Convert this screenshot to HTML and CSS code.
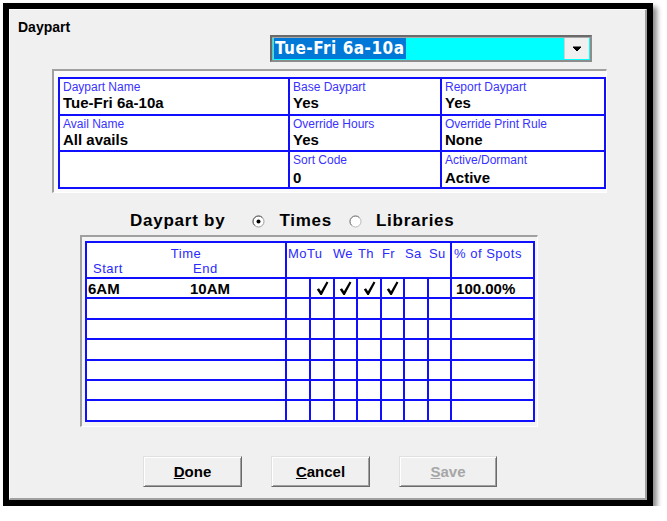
FILE: index.html
```html
<!DOCTYPE html>
<html>
<head>
<meta charset="utf-8">
<link rel="stylesheet" href="styles.css">
</head>
<body>
<div class="frame">
  <div class="win">
    <div class="head">
      <div class="title">Daypart</div>
      <div class="combo">
        <div class="combo-field"><span class="sel">Tue-Fri 6a-10a</span></div>
        <div class="combo-btn">
          <svg width="10" height="6" viewBox="0 0 10 6"><path d="M1 1 H9 L5 5 Z" fill="#000" stroke="#000" stroke-width="1"/></svg>
        </div>
      </div>
    </div>

    <div class="info-panel">
      <table class="info">
        <colgroup><col class="c1"><col class="c2"><col class="c3"></colgroup>
        <tr class="r1">
          <td><div class="lbl">Daypart Name</div><div class="val">Tue-Fri 6a-10a</div></td>
          <td><div class="lbl">Base Daypart</div><div class="val">Yes</div></td>
          <td><div class="lbl">Report Daypart</div><div class="val">Yes</div></td>
        </tr>
        <tr class="r2">
          <td><div class="lbl">Avail Name</div><div class="val">All avails</div></td>
          <td><div class="lbl">Override Hours</div><div class="val">Yes</div></td>
          <td><div class="lbl">Override Print Rule</div><div class="val">None</div></td>
        </tr>
        <tr class="r3">
          <td></td>
          <td><div class="lbl">Sort Code</div><div class="val low">0</div></td>
          <td><div class="lbl">Active/Dormant</div><div class="val low">Active</div></td>
        </tr>
      </table>
    </div>

    <div class="by-row">
      <span class="by-label">Daypart by</span>
      <span class="radio">
        <svg width="13" height="13" viewBox="0 0 13 13"><circle cx="6.5" cy="6.5" r="5.5" fill="#fff" stroke="#9a9a9a" stroke-width="1"/><path d="M2.6 10.4 A5.5 5.5 0 0 1 10.4 2.6" fill="none" stroke="#5d5d5d" stroke-width="1"/><circle cx="6.5" cy="6.5" r="2" fill="#000"/></svg>
      </span>
      <span class="opt">Times</span>
      <span class="radio">
        <svg width="13" height="13" viewBox="0 0 13 13"><circle cx="6.5" cy="6.5" r="5.5" fill="#fff" stroke="#b8b8b8" stroke-width="1"/><path d="M2.6 10.4 A5.5 5.5 0 0 1 10.4 2.6" fill="none" stroke="#7d7d7d" stroke-width="1"/></svg>
      </span>
      <span class="opt">Libraries</span>
    </div>

    <div class="grid-panel">
      <table class="grid">
        <colgroup>
          <col class="g-time"><col class="g-d24"><col class="g-d24"><col class="g-d23"><col class="g-d24"><col class="g-d23"><col class="g-d24"><col class="g-d23"><col class="g-pct">
        </colgroup>
        <tr class="hdr">
          <td class="h-time">
            <div class="h-center">Time</div>
            <div class="h-sub"><span class="h-start">Start</span><span>End</span></div>
          </td>
          <td colspan="7" class="h-days">
            <span class="d-mo">Mo</span><span class="d-tu">Tu</span><span class="d-we">We</span><span class="d-th">Th</span><span class="d-fr">Fr</span><span class="d-sa">Sa</span><span>Su</span>
          </td>
          <td class="h-pct">% of Spots</td>
        </tr>
        <tr class="row">
          <td class="t-cell"><span class="t-start">6AM</span><span>10AM</span></td>
          <td></td>
          <td class="chk"><svg class="tick" width="13" height="15" viewBox="0 0 13 15"><path d="M0.8 8.6 L3 7.2 L5 10.2 L10.6 0.6 L12.4 1.6 L5.8 14 L4.4 14 Z" fill="#000"/></svg></td>
          <td class="chk"><svg class="tick" width="13" height="15" viewBox="0 0 13 15"><path d="M0.8 8.6 L3 7.2 L5 10.2 L10.6 0.6 L12.4 1.6 L5.8 14 L4.4 14 Z" fill="#000"/></svg></td>
          <td class="chk"><svg class="tick" width="13" height="15" viewBox="0 0 13 15"><path d="M0.8 8.6 L3 7.2 L5 10.2 L10.6 0.6 L12.4 1.6 L5.8 14 L4.4 14 Z" fill="#000"/></svg></td>
          <td class="chk"><svg class="tick" width="13" height="15" viewBox="0 0 13 15"><path d="M0.8 8.6 L3 7.2 L5 10.2 L10.6 0.6 L12.4 1.6 L5.8 14 L4.4 14 Z" fill="#000"/></svg></td>
          <td></td>
          <td></td>
          <td class="pct">100.00%</td>
        </tr>
        <tr class="row b"><td></td><td></td><td></td><td></td><td></td><td></td><td></td><td></td><td></td></tr>
        <tr class="row"><td></td><td></td><td></td><td></td><td></td><td></td><td></td><td></td><td></td></tr>
        <tr class="row b"><td></td><td></td><td></td><td></td><td></td><td></td><td></td><td></td><td></td></tr>
        <tr class="row"><td></td><td></td><td></td><td></td><td></td><td></td><td></td><td></td><td></td></tr>
        <tr class="row"><td></td><td></td><td></td><td></td><td></td><td></td><td></td><td></td><td></td></tr>
        <tr class="row b"><td></td><td></td><td></td><td></td><td></td><td></td><td></td><td></td><td></td></tr>
      </table>
    </div>

    <div class="buttons">
      <button class="btn"><u>D</u>one</button>
      <button class="btn"><u>C</u>ancel</button>
      <button class="btn disabled"><u>S</u>ave</button>
    </div>
  </div>
</div>
</body>
</html>
```

FILE: styles.css
```css
html, body {
  margin: 0;
  padding: 0;
  background: #ffffff;
  font-family: "Liberation Sans", Arial, sans-serif;
}

.frame {
  margin: 3px 0 0 3px;
  width: 638px;
  height: 491px;
  border: 6px solid #000;
  box-shadow: 4px 4px 5px rgba(0, 0, 0, 0.45);
}

.win {
  height: 100%;
  box-sizing: border-box;
  background: #f0f0f0;
  border-left: 1px solid #ffffff;
  border-top: 1px solid #ffffff;
  border-right: 2px solid #a0a0a0;
  border-bottom: 2px solid #a0a0a0;
  display: flex;
  flex-direction: column;
}

/* header */
.head {
  display: flex;
  justify-content: space-between;
  align-items: flex-start;
  padding: 0 53px 0 8px;
}

.title {
  margin-top: 9px;
  font-size: 14px;
  font-weight: bold;
  line-height: 16px;
  color: #000;
}

.combo {
  margin-top: 25px;
  width: 322px;
  height: 27px;
  box-sizing: border-box;
  border: 2px solid #8c8c8c;
  border-top-color: #6a6a6a;
  border-left-color: #6a6a6a;
  box-shadow: inset 1px 1px 0 #a8a8a8;
  background: #00ffff;
  display: flex;
  padding: 1px 1px 1px 2px;
}

.combo-field {
  flex: 1;
  display: flex;
  align-items: stretch;
}

.sel {
  background: #0078d7;
  color: #ffffff;
  font-family: "DejaVu Sans Condensed", "DejaVu Sans", sans-serif;
  font-weight: bold;
  font-size: 17px;
  letter-spacing: 0.5px;
  line-height: 21px;
  padding: 0 1px 0 1px;
}

.combo-btn {
  width: 24px;
  background: #f0f0f0;
  border-left: 1px solid #d0d0d0;
  display: flex;
  align-items: center;
  justify-content: center;
}

/* info panel */
.info-panel {
  margin: 7px 0 0 42px;
  width: 555px;
  box-sizing: border-box;
  border-top: 2px solid #a0a0a0;
  border-left: 2px solid #a0a0a0;
  border-right: 1px solid #ffffff;
  border-bottom: 1px solid #ffffff;
  padding: 6px 2px 3px 4px;
  background: #fafafa;
}

.info {
  border-collapse: collapse;
  table-layout: fixed;
  width: 546px;
  background: #ffffff;
}

.info .c1 { width: 230px; }
.info .c2 { width: 152px; }
.info .c3 { width: 164px; }

.info td {
  border: 2px solid #1010ff;
  vertical-align: top;
  padding: 2px 3px 0 3px;
  height: 33px;
}

.info .r2 td { height: 32px; }

.lbl {
  font-size: 12px;
  line-height: 13px;
  color: #3a32ff;
}

.val {
  font-size: 15px;
  font-weight: bold;
  line-height: 17px;
  color: #000;
}

.val.low { margin-top: 2px; }

/* daypart by */
.by-row {
  margin: 19px 0 0 120px;
  display: flex;
  align-items: center;
  height: 18px;
  font-size: 17px;
  font-weight: bold;
  letter-spacing: 0.75px;
  color: #000;
}

.by-label { margin-right: 27px; }

.radio {
  display: flex;
  align-items: center;
  margin-right: 14px;
}

.opt { margin-right: 17px; }

/* grid panel */
.grid-panel {
  margin: 5px 0 0 70px;
  width: 458px;
  box-sizing: border-box;
  border-top: 2px solid #a0a0a0;
  border-left: 2px solid #a0a0a0;
  border-right: 1px solid #ffffff;
  border-bottom: 1px solid #ffffff;
  padding: 4px 4px 4px 3px;
  background: #f4f4f4;
}

.grid {
  border-collapse: collapse;
  table-layout: fixed;
  width: 448px;
  background: #ffffff;
}

.g-time { width: 200px; }
.g-d24 { width: 24px; }
.g-d23 { width: 23px; }
.g-pct { width: 83px; }

.grid td {
  border: 2px solid #1010ff;
  padding: 0;
  height: 18px;
  vertical-align: middle;
}

.grid .row.b td { height: 19px; }

.grid .hdr td {
  height: 36px;
  vertical-align: top;
  font-size: 13px;
  line-height: 14px;
  color: #2a2aff;
  letter-spacing: 0.5px;
  padding-top: 4px;
  box-sizing: border-box;
}

.h-center { text-align: center; }

.h-sub {
  display: flex;
  padding-left: 6px;
  margin-top: 1px;
}

.h-start { width: 100px; }

.grid .hdr .h-days {
  padding-left: 1px;
  white-space: nowrap;
  letter-spacing: 0.3px;
}

.h-days span { display: inline-block; }
.d-mo { width: 19px; }
.d-tu { width: 26px; }
.d-we { width: 25px; }
.d-th { width: 24px; }
.d-fr { width: 23px; }
.d-sa { width: 24px; }

.grid .hdr .h-pct { padding-left: 2px; }

.t-cell {
  font-size: 15px;
  font-weight: bold;
  padding-left: 1px !important;
}

.t-cell span { display: inline-block; }
.t-start { width: 102px; }

.chk {
  text-align: center;
  line-height: 0;
}

.tick { display: inline-block; vertical-align: middle; }

.pct {
  font-size: 15px;
  font-weight: bold;
  padding-left: 4px !important;
}

/* buttons */
.buttons {
  margin: 29px 0 0 133px;
  display: flex;
  gap: 29px;
}

.btn {
  width: 99px;
  height: 31px;
  box-sizing: border-box;
  background: #f0f0f0;
  border: 1px solid;
  border-color: #e0e0e0 #6a6a6a #6a6a6a #e0e0e0;
  box-shadow: inset 1px 1px 0 #ffffff, inset -1px -1px 0 #a0a0a0;
  font-family: "Liberation Sans", Arial, sans-serif;
  font-size: 15px;
  font-weight: bold;
  color: #000;
  padding: 0;
}

.btn.disabled {
  width: 98px;
  color: #a6a6a6;
}
```
